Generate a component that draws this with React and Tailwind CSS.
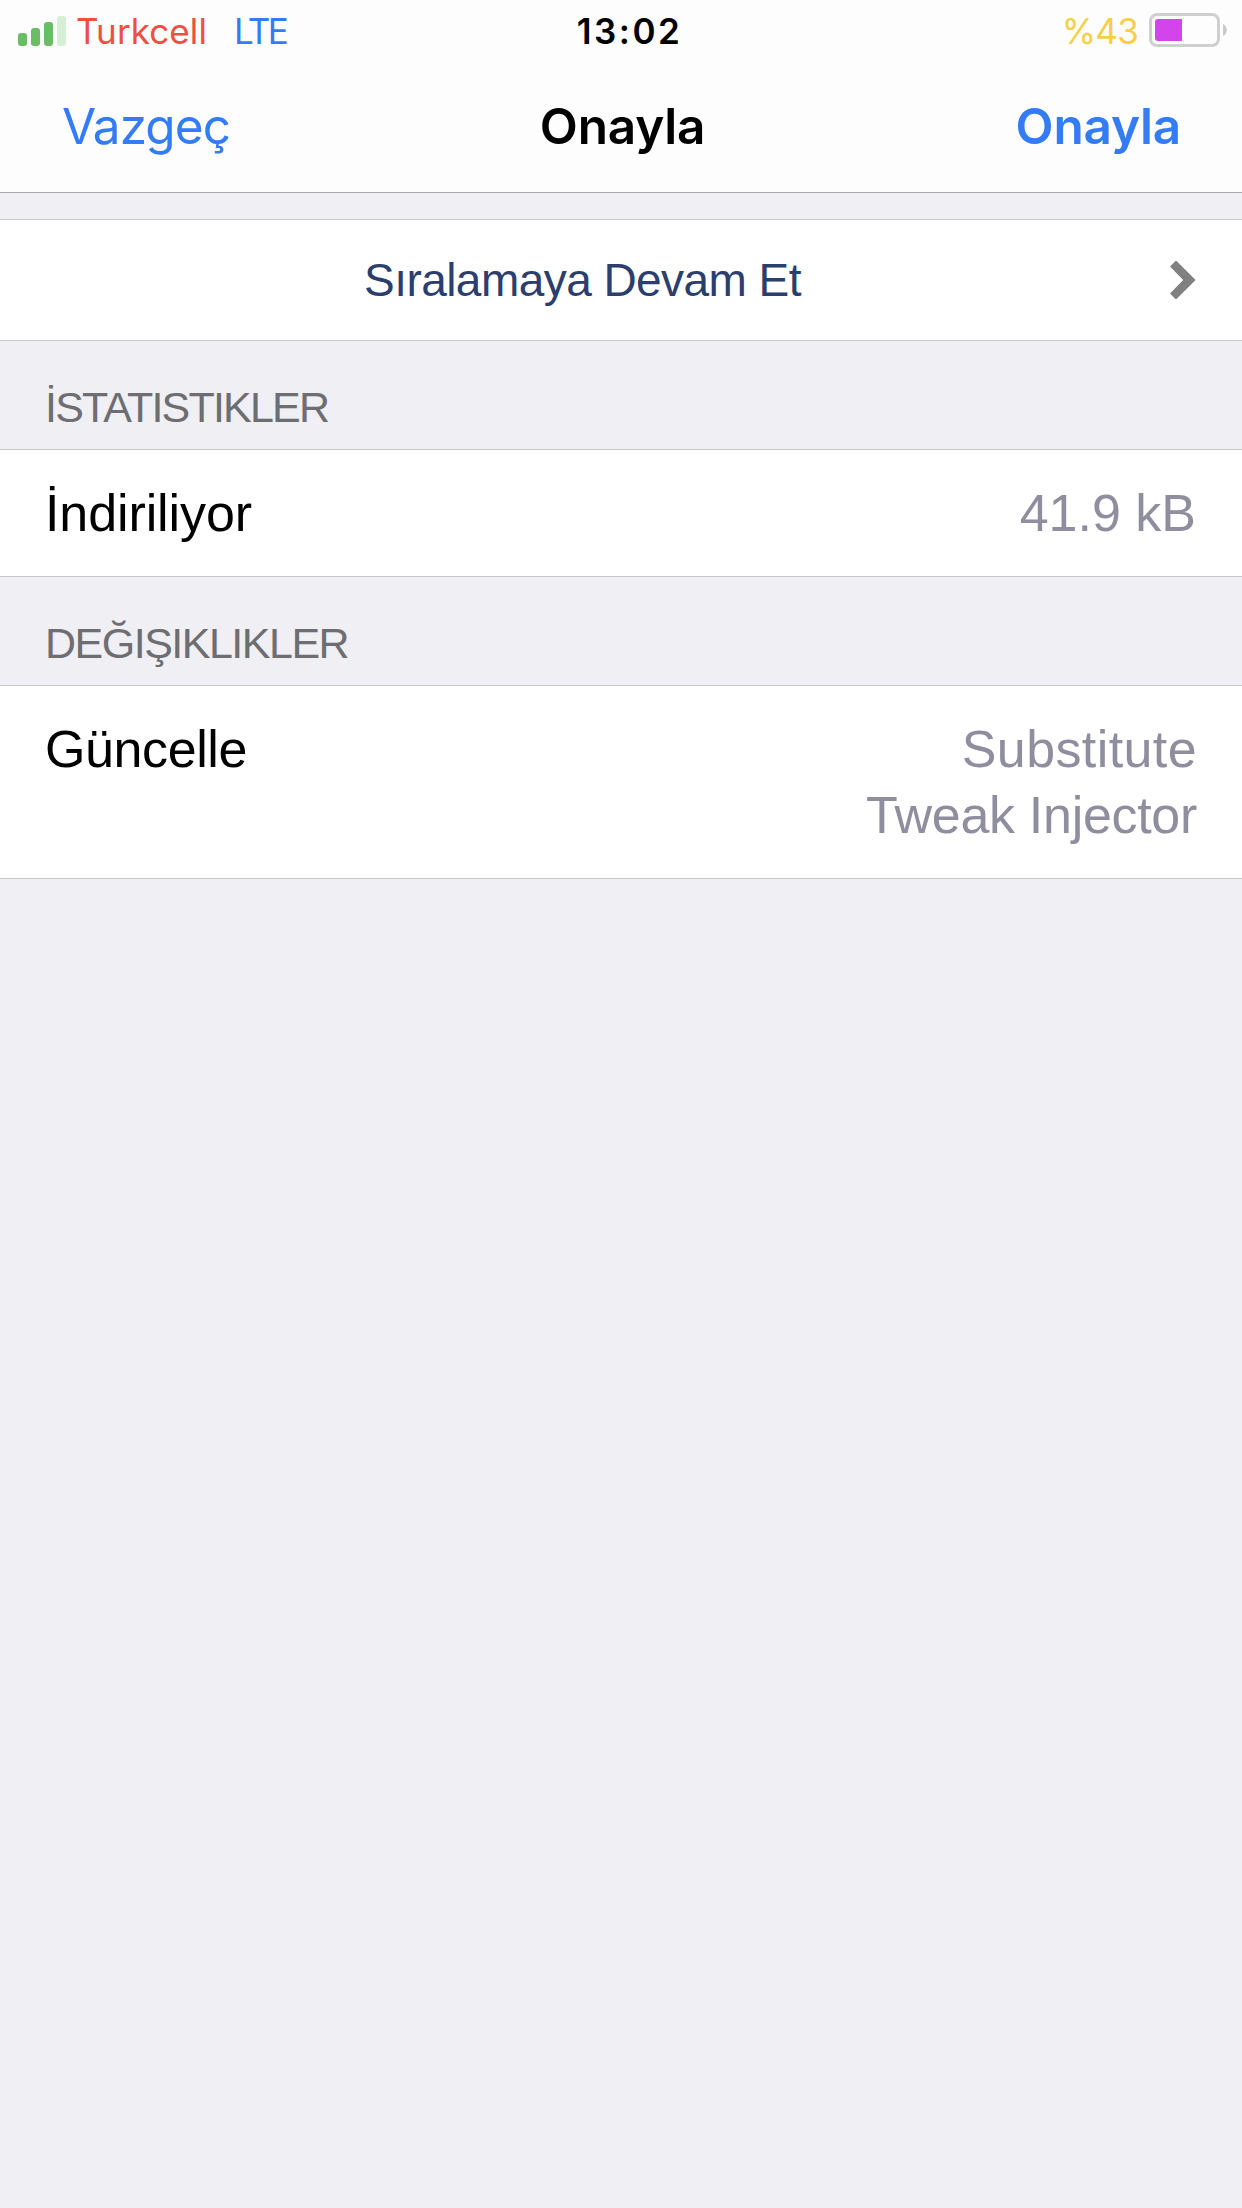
const SECTIONS = [
  {
    title: "İSTATISTIKLER",
    titleClass: "tracking-[-1.8px]",
    label: "İndiriliyor",
    labelClass: "tracking-[-0.1px]",
    values: [{ text: "41.9 kB", className: "pr-px tracking-normal" }],
  },
  {
    title: "DEĞIŞIKLIKLER",
    titleClass: "tracking-[-1.5px]",
    label: "Güncelle",
    labelClass: "tracking-[-0.4px]",
    values: [
      { text: "Substitute", className: "tracking-[0.4px]" },
      { text: "Tweak Injector", className: "tracking-[-0.3px]" },
    ],
  },
];

export default function App() {
  return (
    <div className="min-h-[2208px] w-full bg-[#efeff4] font-['Liberation_Sans',sans-serif] text-black">
      <header className="h-[193px] border-b border-[#a7a7ab] bg-[#fdfdfd] font-['Inter',sans-serif]">
        <StatusBar />
        <NavBar />
      </header>

      <main className="pt-[26px]">
        <button
          type="button"
          className="flex h-[122px] w-full items-center border-y border-[#c8c7cc] bg-white px-[45px] text-[46px] text-[#2c3e6e]"
        >
          <span className="flex-1 pr-[50px] text-center tracking-[-0.55px]">
            Sıralamaya Devam Et
          </span>
          <ChevronIcon />
        </button>

        {SECTIONS.map((section) => (
          <Section key={section.title} section={section} />
        ))}
      </main>
    </div>
  );
}

function StatusBar() {
  return (
    <div className="grid h-[62px] grid-cols-3 items-center pr-[14px] pl-[18px] text-[35px] leading-[62px]">
      <div className="flex items-center">
        <SignalIcon />
        <span className="ml-[10px] tracking-[0.1px] text-[#f04e43]">Turkcell</span>
        <span className="ml-[27px] tracking-[-2.6px] text-[#347cf6]">LTE</span>
      </div>

      <span className="pl-[13px] text-center font-semibold tracking-[2.5px]">13:02</span>

      <div className="flex items-center justify-end">
        <span className="mr-[11px] tracking-[-0.8px] text-[#f8ce46]">%43</span>
        <BatteryIcon />
      </div>
    </div>
  );
}

function NavBar() {
  return (
    <nav className="grid h-[128px] grid-cols-3 items-center pr-[61px] pl-[62px] text-[49.5px] leading-[128px]">
      <button type="button" className="text-left tracking-[-0.9px] text-[#347cf6]">
        Vazgeç
      </button>
      <h1 className="pl-[2px] text-center font-semibold tracking-[-0.2px]">Onayla</h1>
      <button type="button" className="text-right font-semibold tracking-[-0.2px] text-[#347cf6]">
        Onayla
      </button>
    </nav>
  );
}

function Section({ section }) {
  return (
    <section>
      <h2
        className={`h-[108px] px-[45px] pt-[36px] text-[43px] leading-[60px] text-[#6d6d72] ${section.titleClass}`}
      >
        {section.title}
      </h2>

      <div className="flex justify-between border-y border-[#c8c7cc] bg-white px-[45px] py-[30px] text-[52px] leading-[66px]">
        <span className={section.labelClass}>{section.label}</span>
        <div className="text-right text-[#8f8e9f]">
          {section.values.map((value) => (
            <p key={value.text} className={value.className}>
              {value.text}
            </p>
          ))}
        </div>
      </div>
    </section>
  );
}

function SignalIcon() {
  return (
    <svg className="h-[30px] w-[48px]" viewBox="0 0 48 30">
      <g fill="#69be64">
        <rect x="0" y="17" width="9" height="13" rx="3" />
        <rect x="13" y="12" width="9" height="18" rx="3" />
        <rect x="26" y="6" width="9" height="24" rx="3" />
      </g>
      <rect x="39" y="0" width="9" height="30" rx="3" fill="#d5efd6" />
    </svg>
  );
}

function BatteryIcon() {
  return (
    <svg className="mb-[2px] h-[34px] w-[79px]" viewBox="0 0 79 34">
      <rect x="1.5" y="1.5" width="68" height="31" rx="6.5" fill="none" stroke="#cfcfd0" strokeWidth="3" />
      <path d="M9 6h24v22H9a3 3 0 0 1-3-3V9a3 3 0 0 1 3-3z" fill="#d344ec" />
      <path d="M74 11c5 2 5 10 0 12z" fill="#c9c9ca" />
    </svg>
  );
}

function ChevronIcon() {
  return (
    <svg className="h-[40px] w-[27px]" viewBox="0 0 27 40">
      <path d="M6 0.5L0 6.5L13.2 20L0 33.5L6 39.5L25.6 20z" fill="#808080" />
    </svg>
  );
}
